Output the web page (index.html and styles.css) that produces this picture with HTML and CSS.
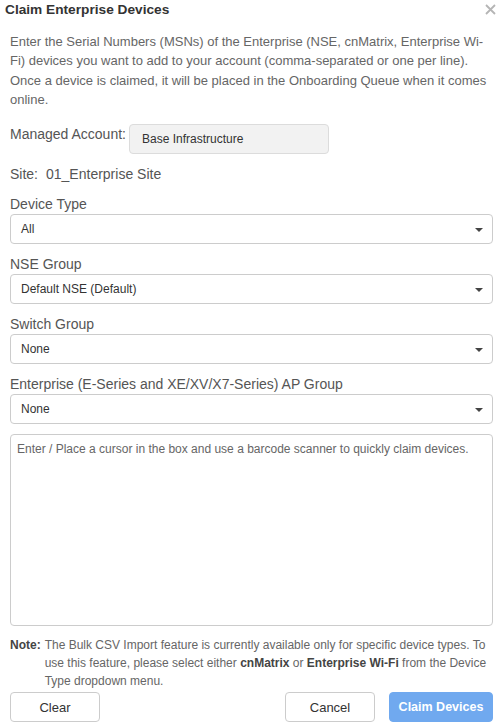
FILE: index.html
```html
<!DOCTYPE html>
<html>
<head>
<meta charset="utf-8">
<link rel="stylesheet" href="styles.css">
</head>
<body>
<div class="modal">
  <div class="modal-header">
    <h1 class="modal-title">Claim Enterprise Devices</h1>
    <span class="close">
      <svg width="11" height="11" viewBox="0 0 11 11"><path d="M1 1L10 10M10 1L1 10" stroke="#b5b5b5" stroke-width="1.8" fill="none"/></svg>
    </span>
  </div>
  <div class="modal-body">
    <p class="intro">Enter the Serial Numbers (MSNs) of the Enterprise (NSE, cnMatrix, Enterprise Wi-Fi) devices you want to add to your account (comma-separated or one per line). Once a device is claimed, it will be placed in the Onboarding Queue when it comes online.</p>

    <div class="account-row">
      <span class="label">Managed Account:</span>
      <div class="readonly-box">Base Infrastructure</div>
    </div>

    <div class="site-row"><span>Site:</span><span>01_Enterprise Site</span></div>

    <div class="field">
      <div class="label">Device Type</div>
      <div class="select"><span>All</span><i class="caret"></i></div>
    </div>
    <div class="field">
      <div class="label">NSE Group</div>
      <div class="select"><span>Default NSE (Default)</span><i class="caret"></i></div>
    </div>
    <div class="field">
      <div class="label">Switch Group</div>
      <div class="select"><span>None</span><i class="caret"></i></div>
    </div>
    <div class="field">
      <div class="label">Enterprise (E-Series and XE/XV/X7-Series) AP Group</div>
      <div class="select"><span>None</span><i class="caret"></i></div>
    </div>

    <div class="textarea">Enter / Place a cursor in the box and use a barcode scanner to quickly claim devices.</div>

    <div class="note">
      <b class="note-key">Note:</b>
      <p class="note-text">The Bulk CSV Import feature is currently available only for specific device types. To use this feature, please select either <strong>cnMatrix</strong> or <strong>Enterprise Wi-Fi</strong> from the Device Type dropdown menu.</p>
    </div>

    <div class="footer">
      <button class="btn">Clear</button>
      <div class="footer-right">
        <button class="btn">Cancel</button>
        <button class="btn btn-primary">Claim Devices</button>
      </div>
    </div>
  </div>
</div>
</body>
</html>
```

FILE: styles.css
```css
* { box-sizing: border-box; }
html, body {
  margin: 0;
  padding: 0;
  background: #fff;
  font-family: "Liberation Sans", Arial, sans-serif;
  color: #555;
}
.modal { width: 503px; }
.modal-header {
  display: flex;
  justify-content: space-between;
  align-items: flex-start;
  padding: 0 7px 0 5px;
  height: 32px;
}
.modal-title {
  margin: 0;
  font-size: 13.7px;
  font-weight: bold;
  color: #333;
  line-height: 20px;
}
.close { padding-top: 4px; line-height: 0; }
.modal-body { padding: 0 10px; }
.intro {
  margin: 0;
  font-size: 13px;
  line-height: 19.3px;
  color: #666;
}
.label {
  font-size: 14px;
  line-height: 20px;
  color: #555;
}
.account-row {
  display: flex;
  align-items: flex-start;
  gap: 3px;
  margin-top: 15px;
}
.readonly-box {
  width: 200px;
  height: 30px;
  background: #f2f2f2;
  border: 1px solid #dcdcdc;
  border-radius: 4px;
  font-size: 12px;
  color: #333;
  line-height: 28px;
  padding-left: 12px;
}
.site-row {
  display: flex;
  gap: 8px;
  margin-top: 10px;
  font-size: 14px;
  line-height: 20px;
  color: #555;
}
.field { margin-top: 10px; }
.select {
  display: flex;
  justify-content: space-between;
  align-items: center;
  height: 30px;
  border: 1px solid #ccc;
  border-radius: 4px;
  padding: 0 9px 0 10px;
  font-size: 12px;
  color: #333;
}
.caret {
  width: 0;
  height: 0;
  border-left: 4px solid transparent;
  border-right: 4px solid transparent;
  border-top: 4px solid #444;
  margin-top: 1px;
}
.textarea {
  margin-top: 10px;
  height: 192px;
  border: 1px solid #ccc;
  border-radius: 4px;
  padding: 6px 6px;
  font-size: 12px;
  line-height: 16px;
  color: #666;
}
.note {
  display: flex;
  gap: 4px;
  margin-top: 10px;
  font-size: 12px;
  line-height: 18px;
  color: #666;
}
.note-key { color: #444; flex: none; }
.note-text { margin: 0; }
.note-text strong { color: #444; }
.footer {
  display: flex;
  justify-content: space-between;
  margin-top: 2px;
}
.footer-right { display: flex; gap: 14px; }
.btn {
  height: 30px;
  width: 90px;
  font-family: "Liberation Sans", Arial, sans-serif;
  font-size: 13px;
  color: #333;
  background: #fff;
  border: 1px solid #ccc;
  border-radius: 4px;
  padding: 0;
}
.btn-primary {
  width: 104px;
  background: #70a9ef;
  border-color: #70a9ef;
  color: #fff;
  font-weight: bold;
  font-size: 12.5px;
}
```
